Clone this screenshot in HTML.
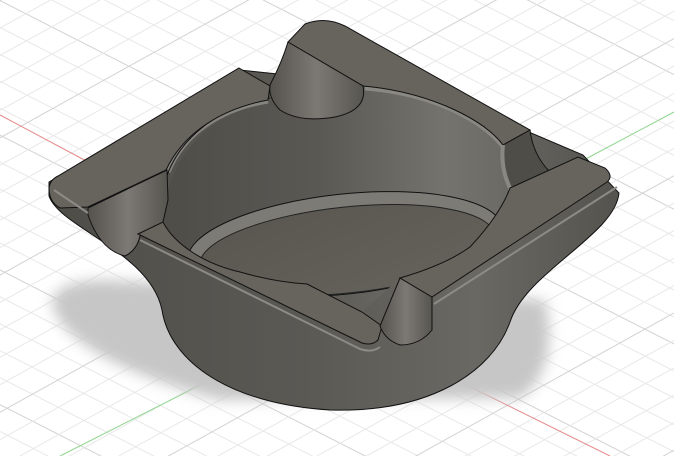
<!DOCTYPE html>
<html><head><meta charset="utf-8"><style>html,body{margin:0;padding:0;background:#fff;overflow:hidden}svg{display:block}</style></head>
<body>
<svg width="674" height="456" viewBox="0 0 674 456" xmlns="http://www.w3.org/2000/svg">
<defs>
<pattern id="ga" width="120" height="120" patternUnits="userSpaceOnUse" patternTransform="rotate(27)">
<line x1="0" y1="0.5" x2="120" y2="0.5" stroke="#d2d2d2" stroke-width="1"/>
<line x1="0" y1="24.5" x2="120" y2="24.5" stroke="#e8e8e8" stroke-width="1"/>
<line x1="0" y1="48.5" x2="120" y2="48.5" stroke="#e8e8e8" stroke-width="1"/>
<line x1="0" y1="72.5" x2="120" y2="72.5" stroke="#e8e8e8" stroke-width="1"/>
<line x1="0" y1="96.5" x2="120" y2="96.5" stroke="#e8e8e8" stroke-width="1"/>
</pattern>
<pattern id="gb" width="120" height="120" patternUnits="userSpaceOnUse" patternTransform="rotate(-29)">
<line x1="0" y1="0.5" x2="120" y2="0.5" stroke="#d2d2d2" stroke-width="1"/>
<line x1="0" y1="24.5" x2="120" y2="24.5" stroke="#e8e8e8" stroke-width="1"/>
<line x1="0" y1="48.5" x2="120" y2="48.5" stroke="#e8e8e8" stroke-width="1"/>
<line x1="0" y1="72.5" x2="120" y2="72.5" stroke="#e8e8e8" stroke-width="1"/>
<line x1="0" y1="96.5" x2="120" y2="96.5" stroke="#e8e8e8" stroke-width="1"/>
</pattern>
<filter id="blur" x="-20%" y="-20%" width="140%" height="140%"><feGaussianBlur stdDeviation="7"/></filter>
<linearGradient id="body" x1="0" y1="0" x2="1" y2="0">
<stop offset="0" stop-color="#4f4d48"/><stop offset="0.45" stop-color="#5b5954"/><stop offset="0.75" stop-color="#6a6863"/><stop offset="1" stop-color="#55534e"/></linearGradient>
<linearGradient id="wall" x1="0" y1="0" x2="1" y2="0">
<stop offset="0" stop-color="#4e4c47"/><stop offset="0.45" stop-color="#5a5853"/><stop offset="0.8" stop-color="#75736e"/><stop offset="1" stop-color="#6a6863"/></linearGradient>
<linearGradient id="floor" x1="0" y1="0" x2="1" y2="1">
<stop offset="0" stop-color="#58564f"/><stop offset="1" stop-color="#66635d"/></linearGradient>
<linearGradient id="trough" x1="0" y1="0" x2="1" y2="0">
<stop offset="0" stop-color="#55524d"/><stop offset="0.5" stop-color="#7c7974"/><stop offset="1" stop-color="#57554f"/></linearGradient>
<clipPath id="bowl"><path d="M165,225 C160,160 215,108 272,100 L363,86 C430,92 485,120 505,148 L512,195 Q500,215 470,247 Q445,265 400,278 L362,312 L307,284 C290,283 268,280 240,272 C205,264 175,245 163,222 Z"/></clipPath>
</defs>
<rect width="674" height="456" fill="#fff"/>
<rect width="674" height="456" fill="url(#ga)"/>
<rect width="674" height="456" fill="url(#gb)"/>
<line x1="0" y1="115" x2="90" y2="163" stroke="#e58a8a" stroke-width="1"/>
<line x1="440" y1="372" x2="610" y2="456" stroke="#e58a8a" stroke-width="1"/>
<line x1="674" y1="112" x2="580" y2="162" stroke="#8fd68f" stroke-width="1"/>
<line x1="230" y1="370" x2="60" y2="456" stroke="#8fd68f" stroke-width="1"/>
<!-- shadow -->
<path d="M52,305 Q52,282 100,280 L545,300 Q560,370 520,398 L220,400 Q70,360 52,305 Z" fill="#c6c6c6" filter="url(#blur)"/>
<!-- body -->
<path d="M49,182 L49,196 C60,228 150,252 162,310 C170,362 230,404 330,410 C430,413 492,372 510,322 C526,272 615,235 619,193 L583,155 L430,90 L240,70 Z" fill="url(#body)" stroke="#111" stroke-width="1"/>
<!-- bowl interior -->
<g clip-path="url(#bowl)">
<rect x="150" y="80" width="370" height="240" fill="url(#wall)"/>
<ellipse cx="345" cy="244" rx="158" ry="50" transform="rotate(-6 345 244)" fill="#7d7b76" stroke="#111"/>
<ellipse cx="347" cy="250" rx="148" ry="43" transform="rotate(-6 347 250)" fill="url(#floor)" stroke="#222"/>
</g>
<!-- upper rim fillet -->
<path d="M168,172 C185,130 225,108 268,101" fill="none" stroke="#86847f" stroke-width="5"/>
<path d="M365,88 C430,93 480,118 503,146" fill="none" stroke="#8a8883" stroke-width="5"/>
<path d="M166,178 C182,132 225,106 270,98 M365,84 C430,90 482,116 505,144" fill="none" stroke="#111" stroke-width="1"/>
<!-- back plateau -->
<path d="M288,42 L363,86 C430,92 485,120 503,145 L530,130 L345,26 Q325,16 305,24 Z" fill="#67645d" stroke="#111"/>
<path d="M503,145 L530,130 Q533,155 550,172 L512,192 Q500,170 503,145 Z" fill="#4f4d48" stroke="#111"/>
<path d="M503,145 Q500,170 512,192" fill="none" stroke="#8a8883" stroke-width="4"/>
<!-- back trough -->
<path d="M288,42 L363,86 Q368,110 335,117 Q300,123 280,110 Q268,98 270,85 Q282,62 288,42 Z" fill="url(#trough)" stroke="#111"/>
<!-- left arm -->
<path d="M239,68 L270,86 L268,100 C225,108 185,130 166,170 L88,207 L60,208 Q49,202 49,188 Q50,180 58,176 Z" fill="#67645d" stroke="#111"/>
<path d="M88,208 L167,170 L168,200 L163,222 L140,236 Q137,250 125,256 Q100,250 88,215 Z" fill="url(#trough)" stroke="#111"/>
<!-- front plate -->
<path d="M138,234 L163,222 C175,245 205,264 240,272 C268,280 290,283 307,284 L362,312 L382,326 L378,340 Q372,346 362,343 Z" fill="#67645d" stroke="#111"/>
<path d="M140,240 L360,349 Q372,353 380,347" fill="none" stroke="#8d8b86" stroke-width="2"/>
<!-- right trough -->
<path d="M380,326 L400,278 L432,297 L432,330 Q420,345 400,345 Q385,340 380,326 Z" fill="url(#trough)" stroke="#111"/>
<!-- right plate -->
<path d="M432,297 L400,278 Q445,265 470,247 Q500,215 510,188 L578,157 L605,168 Q614,176 607,182 Z" fill="#67645d" stroke="#111"/>
<path d="M434,304 L617,187" stroke="#8d8b86" stroke-width="2"/>
<path d="M54,190 L88,213" stroke="#8d8b86" stroke-width="2"/>
</svg>
</body></html>
